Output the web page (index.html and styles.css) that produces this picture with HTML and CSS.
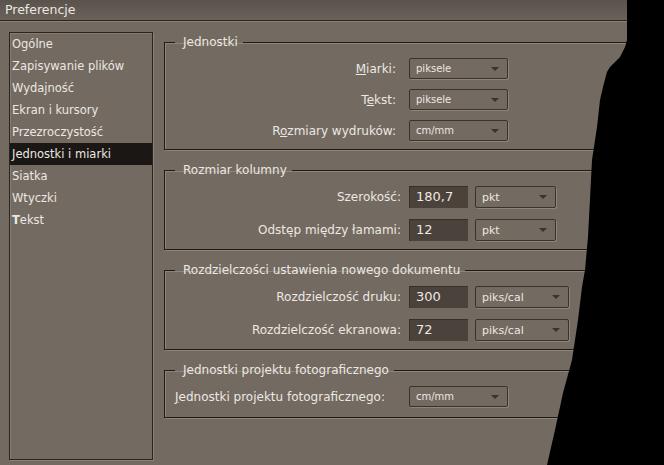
FILE: index.html
```html
<!DOCTYPE html>
<html lang="pl">
<head>
    <meta charset="UTF-8">
    <title>Preferencje</title>
    <link rel="stylesheet" href="styles.css">
</head>
<body>
    <div class="titlebar">Preferencje</div>

    <div class="window">
        <ul class="nav">
            <li>Ogólne</li>
            <li>Zapisywanie plików</li>
            <li>Wydajność</li>
            <li>Ekran i kursory</li>
            <li>Przezroczystość</li>
            <li class="active">Jednostki i miarki</li>
            <li>Siatka</li>
            <li>Wtyczki</li>
            <li><b>T</b>ekst</li>
        </ul>

        <div class="panel">
            <fieldset class="group units">
                <legend>Jednostki</legend>
                <div class="row">
                    <span class="lbl"><u>M</u>iarki:</span>
                    <div class="select">piksele</div>
                </div>
                <div class="row">
                    <span class="lbl">T<u>e</u>kst:</span>
                    <div class="select">piksele</div>
                </div>
                <div class="row">
                    <span class="lbl">R<u>o</u>zmiary wydruków:</span>
                    <div class="select">cm/mm</div>
                </div>
            </fieldset>

            <fieldset class="group column">
                <legend>Rozmiar kolumny</legend>
                <div class="row">
                    <span class="lbl">Szerokość:</span>
                    <div class="field">180,7</div>
                    <div class="select mid">pkt</div>
                </div>
                <div class="row">
                    <span class="lbl">Odstęp między łamami:</span>
                    <div class="field">12</div>
                    <div class="select mid">pkt</div>
                </div>
            </fieldset>

            <fieldset class="group column">
                <legend>Rozdzielczości ustawienia nowego dokumentu</legend>
                <div class="row">
                    <span class="lbl">Rozdzielczość druku:</span>
                    <div class="field">300</div>
                    <div class="select mid wide">piks/cal</div>
                </div>
                <div class="row">
                    <span class="lbl">Rozdzielczość ekranowa:</span>
                    <div class="field">72</div>
                    <div class="select mid wide">piks/cal</div>
                </div>
            </fieldset>

            <fieldset class="group photo">
                <legend>Jednostki projektu fotograficznego</legend>
                <div class="row">
                    <span class="lbl"><u>J</u>ednostki projektu fotograficznego:</span>
                    <div class="select">cm/mm</div>
                </div>
            </fieldset>
        </div>
    </div>

    <!-- torn edge of the screenshot -->
    <svg class="tear" width="664" height="465" viewBox="0 0 664 465">
        <polygon fill="#000" points="627,0 664,0 664,465 547,465 555,430 563,393 572,360 578,320 582,287 585,270 588,237 592,160 597,127 600,100 603,87 607,72 610,67 620,57 625,47 627,40"/>
    </svg>
</body>
</html>
```

FILE: styles.css
```css
body {
    margin: 0;
    width: 664px;
    height: 465px;
    overflow: hidden;
    position: relative;
    background-color: #736a61;
    color: #ece8e3;
    font-family: "DejaVu Sans", sans-serif;
    font-size: 12px;
}

.titlebar {
    height: 20px;
    line-height: 20px;
    padding-left: 5px;
    font-size: 12.5px;
    background: linear-gradient(#5a534c, #6a625a);
    border-bottom: 1px solid #2a241f;
    box-shadow: 0 1px 0 #8a8178;
}

.window {
    display: flex;
    gap: 11px;
    padding: 11px 0 0 9px;
}

.nav {
    width: 144px;
    height: 428px;
    box-sizing: border-box;
    margin: 0;
    padding: 0;
    list-style: none;
    border: 1px solid #2b241f;
    box-shadow: 1px 1px 0 #8a8178, inset 1px 1px 0 #857c72;
    flex-shrink: 0;
    font-size: 11.5px;
}

.nav li {
    height: 22px;
    line-height: 22px;
    padding-left: 2px;
    white-space: nowrap;
}

.nav li.active {
    background-color: #1b1714;
}

.panel {
    display: flex;
    flex-direction: column;
    gap: 13px;
    width: 560px;
    margin-top: 3px;
    flex-shrink: 0;
}

.group {
    margin: 0;
    padding: 9px 0 8px 0;
    border: 1px solid #211b17;
    box-shadow: 1px 1px 0 #8d847a, inset 1px 1px 0 #8d847a;
    display: flex;
    flex-direction: column;
    gap: 10px;
}

.group legend {
    margin-left: 10px;
    padding: 0 5px 0 8px;
    font-size: 12px;
    line-height: 14px;
}

.row {
    display: flex;
    align-items: center;
    gap: 7px;
}

.lbl {
    white-space: nowrap;
    text-align: right;
}

.units .lbl {
    width: 231px;
    margin-right: 6px;
}

.column {
    gap: 11px;
}

.column .lbl {
    width: 236px;
    margin-right: 1px;
}

.photo {
    padding-bottom: 10px;
}

.photo .lbl {
    width: 227px;
    text-align: left;
    padding-left: 10px;
}

.select {
    width: 99px;
    height: 21px;
    box-sizing: border-box;
    display: flex;
    align-items: center;
    justify-content: space-between;
    padding: 0 8px 0 6px;
    border: 1px solid #3a322c;
    border-radius: 2px;
    box-shadow: 1px 1px 0 #8d847a;
    font-size: 10px;
}

.select::after {
    content: "";
    border-left: 4px solid transparent;
    border-right: 4px solid transparent;
    border-top: 4px solid #3a322c;
}

.select.mid {
    width: 81px;
    height: 22px;
    font-size: 11px;
}

.select.wide {
    width: 94px;
}

.field {
    width: 59px;
    height: 22px;
    box-sizing: border-box;
    padding-left: 6px;
    line-height: 20px;
    font-size: 13px;
    background-color: #4a423b;
    border-top: 1px solid #36302a;
    border-left: 1px solid #36302a;
}

.tear {
    position: absolute;
    top: 0;
    left: 0;
}
```
